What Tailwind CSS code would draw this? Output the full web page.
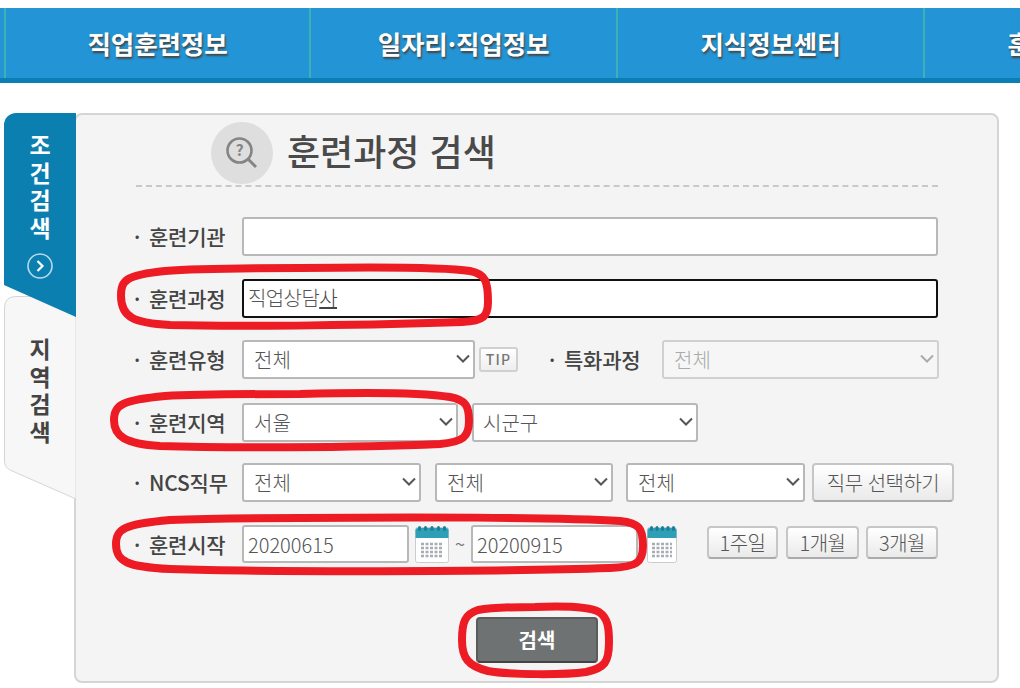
<!DOCTYPE html>
<html lang="ko">
<head>
<meta charset="utf-8">
<script src="https://cdn.jsdelivr.net/npm/@tailwindcss/browser@4"></script>
</head>
<body class="bg-white overflow-hidden font-['Noto_Sans_CJK_KR','Noto_Sans',sans-serif]">
<div class="relative w-[1020px] h-[688px] overflow-hidden pt-[8px]">

  <nav class="h-[75px] bg-[#2394d5] border-b-[5px] border-[#0a7fb4] pl-[4px] flex overflow-hidden">
    <a class="shrink-0 w-[305px] border-l-2 border-[#3fb1b5] flex items-center justify-center text-[25.500px] font-bold tracking-[-0.1px] text-white [text-shadow:1px_2px_2px_#444]">직업훈련정보</a>
    <a class="shrink-0 w-[307px] border-l-2 border-[#3fb1b5] flex items-center justify-center text-[25.500px] font-bold tracking-[-0.1px] text-white [text-shadow:1px_2px_2px_#444]">일자리·직업정보</a>
    <a class="shrink-0 w-[307px] border-l-2 border-[#3fb1b5] flex items-center justify-center text-[25.500px] font-bold tracking-[-0.1px] text-white [text-shadow:1px_2px_2px_#444]">지식정보센터</a>
    <a class="shrink-0 w-[307px] border-l-2 border-[#3fb1b5] flex items-center justify-center text-[25.500px] font-bold tracking-[-0.1px] text-white [text-shadow:1px_2px_2px_#444]">훈련기관정보</a>
  </nav>

  <div class="flex mt-[30px] ml-[4px]">
    <!-- tabs -->
    <div class="w-[72px] shrink-0 relative z-10">
      <div class="relative z-10 h-[204px] bg-[#0a7fb0] rounded-tl-[12px] [clip-path:polygon(0_0,100%_0,100%_100%,0_172px)] flex flex-col items-center pt-[18px] text-white text-[23px] font-bold leading-[27.5px]">
        <span>조</span><span>건</span><span>검</span><span>색</span>
        <svg class="mt-[12px]" width="26" height="26" viewBox="0 0 26 26" fill="none"><circle cx="13" cy="13" r="12" stroke="#b9dcea" stroke-width="1.6"/><path d="M10.5 8l5 5-5 5" stroke="#fff" stroke-width="2.2"/></svg>
      </div>
      <div class="relative -mt-[21px] h-[204px]">
        <svg class="absolute inset-0" width="72" height="204" viewBox="0 0 72 204" fill="none"><path d="M0.5 12Q0.5 0.5 12 0.5H72V203L6 174Q0.5 171 0.5 165Z" fill="#f7f7f7" stroke="#d5d5d1"/></svg>
        <div class="relative flex flex-col items-center pt-[39px] text-[#444] text-[23px] font-semibold leading-[27.5px]">
          <span>지</span><span>역</span><span>검</span><span>색</span>
        </div>
      </div>
    </div>

    <!-- panel -->
    <main class="w-[925px] h-[570px] shrink-0 -ml-[2px] bg-[#f4f4f4] border-2 border-[#d5d5d5] rounded-[8px] pl-[60px]">
      <div class="w-[802px] h-[72px] border-b-2 border-dashed border-[#c8c8c8] flex items-start relative">
        <span class="absolute left-[75px] top-[7px] w-[62px] h-[62px] rounded-full bg-[#dedede] flex items-center justify-center">
          <svg width="38" height="38" viewBox="0 0 38 38" fill="none"><circle cx="16.5" cy="16.5" r="12" stroke="#848484" stroke-width="2.6"/><path d="M25.5 25.5L33 33" stroke="#848484" stroke-width="3"/><text x="16.5" y="22" text-anchor="middle" font-size="16" font-weight="700" fill="#848484">?</text></svg>
        </span>
        <h1 class="ml-[151px] mt-[11px] text-[36px] leading-[48px] font-medium text-[#4a4a4a] whitespace-nowrap">훈련과정 검색</h1>
      </div>

      <div class="flex flex-col">
        <div class="mt-[30px] flex items-center h-[39px]">
          <label class="-ml-[2px] w-[108px] shrink-0 flex text-[21px] font-medium text-[#444] tracking-[-0.2px]"><span class="w-[15px]">·</span>훈련기관</label>
          <input class="w-[696px] h-[39px] bg-white border-2 border-[#b8b8b8] rounded-[3px]">
        </div>
        <div class="mt-[23px] flex items-center h-[39px]">
          <label class="-ml-[2px] w-[108px] shrink-0 flex text-[21px] font-medium text-[#444] tracking-[-0.2px]"><span class="w-[15px]">·</span>훈련과정</label>
          <div class="w-[696px] h-[39px] bg-white border-2 border-[#111] rounded-[3px] pl-[4px] text-[20px] font-light leading-[33px] text-[#555] tracking-[-0.6px]">직업상담<span class="underline text-[#444]">사</span></div>
        </div>
        <div class="mt-[22px] flex items-center h-[39px]">
          <label class="-ml-[2px] w-[108px] shrink-0 flex text-[21px] font-medium text-[#444] tracking-[-0.2px]"><span class="w-[15px]">·</span>훈련유형</label>
          <div class="relative w-[233px] h-[39px]"><select class="w-full h-full appearance-none bg-white border-2 border-[#b8b8b8] rounded-[3px] pl-[10px] text-[20px] font-light text-[#555]"><option>전체</option></select><svg class="absolute right-[5px] top-[14px]" width="14" height="10" viewBox="0 0 14 10" fill="none"><path d="M1 1.5l6 6 6-6" stroke="#555" stroke-width="2"/></svg></div>
          <span class="ml-[4px] w-[39px] h-[25px] rounded-[3px] border-2 border-[#d0d0d0] bg-gradient-to-b from-white to-[#eee] flex items-center justify-center text-[14px] font-medium tracking-[1.2px] text-[#777]">TIP</span>
          <label class="ml-[31px] w-[113px] shrink-0 flex text-[21px] font-medium text-[#444] tracking-[-0.2px]"><span class="w-[15px]">·</span>특화과정</label>
          <div class="relative w-[277px] h-[39px]"><select disabled class="w-full h-full appearance-none bg-[#f6f6f6] border-2 border-[#d0d0d0] rounded-[3px] pl-[10px] text-[20px] font-light text-[#aaa]"><option>전체</option></select><svg class="absolute right-[5px] top-[14px]" width="14" height="10" viewBox="0 0 14 10" fill="none"><path d="M1 1.5l6 6 6-6" stroke="#aaa" stroke-width="2"/></svg></div>
        </div>
        <div class="mt-[24px] flex items-center h-[39px]">
          <label class="-ml-[2px] w-[108px] shrink-0 flex text-[21px] font-medium text-[#444] tracking-[-0.2px]"><span class="w-[15px]">·</span>훈련지역</label>
          <div class="relative w-[216px] h-[39px]"><select class="w-full h-full appearance-none bg-white border-2 border-[#b8b8b8] rounded-[3px] pl-[10px] text-[20px] font-light text-[#555]"><option>서울</option></select><svg class="absolute right-[5px] top-[14px]" width="14" height="10" viewBox="0 0 14 10" fill="none"><path d="M1 1.5l6 6 6-6" stroke="#555" stroke-width="2"/></svg></div>
          <div class="relative ml-[14px] w-[226px] h-[39px]"><select class="w-full h-full appearance-none bg-white border-2 border-[#b8b8b8] rounded-[3px] pl-[9px] text-[20px] font-light text-[#555]"><option>시군구</option></select><svg class="absolute right-[5px] top-[14px]" width="14" height="10" viewBox="0 0 14 10" fill="none"><path d="M1 1.5l6 6 6-6" stroke="#555" stroke-width="2"/></svg></div>
        </div>
        <div class="mt-[21px] flex items-center h-[39px]">
          <label class="-ml-[2px] w-[108px] shrink-0 flex text-[21px] font-medium text-[#444] tracking-[-0.2px]"><span class="w-[15px]">·</span>NCS직무</label>
          <div class="relative w-[179px] h-[39px]"><select class="w-full h-full appearance-none bg-white border-2 border-[#b8b8b8] rounded-[3px] pl-[10px] text-[20px] font-light text-[#555]"><option>전체</option></select><svg class="absolute right-[5px] top-[14px]" width="14" height="10" viewBox="0 0 14 10" fill="none"><path d="M1 1.5l6 6 6-6" stroke="#555" stroke-width="2"/></svg></div>
          <div class="relative ml-[14px] w-[178px] h-[39px]"><select class="w-full h-full appearance-none bg-white border-2 border-[#b8b8b8] rounded-[3px] pl-[10px] text-[20px] font-light text-[#555]"><option>전체</option></select><svg class="absolute right-[5px] top-[14px]" width="14" height="10" viewBox="0 0 14 10" fill="none"><path d="M1 1.5l6 6 6-6" stroke="#555" stroke-width="2"/></svg></div>
          <div class="relative ml-[13px] w-[179px] h-[39px]"><select class="w-full h-full appearance-none bg-white border-2 border-[#b8b8b8] rounded-[3px] pl-[10px] text-[20px] font-light text-[#555]"><option>전체</option></select><svg class="absolute right-[5px] top-[14px]" width="14" height="10" viewBox="0 0 14 10" fill="none"><path d="M1 1.5l6 6 6-6" stroke="#555" stroke-width="2"/></svg></div>
          <button class="ml-[7px] w-[142px] h-[39px] rounded-[4px] border-2 border-[#c6c6c6] border-b-[#aaa] bg-gradient-to-b from-white to-[#eaeaea] text-[20px] font-light text-[#555] tracking-[-0.5px] whitespace-nowrap">직무 선택하기</button>
        </div>
        <div class="mt-[23px] flex items-start h-[39px]">
          <label class="-ml-[2px] w-[108px] shrink-0 flex leading-[39px] text-[21px] font-medium text-[#444] tracking-[-0.2px]"><span class="w-[15px]">·</span>훈련시작</label>
          <input class="w-[167px] h-[38px] bg-white border-2 border-[#b8b8b8] rounded-[3px] pl-[4px] text-[20px] font-light text-[#555]" value="20200615">
          <svg class="ml-[6px] mt-[1px] shrink-0" width="34" height="37" viewBox="0 0 34 37"><rect x="0.5" y="1.5" width="33" height="35" rx="2" fill="#fff" stroke="#ccc"/><path d="M0.5 12V4Q0.5 2 3 2H31Q33.5 2 33.5 4V12Z" fill="#2f9fb8"/><g fill="#1d7f96"><rect x="3" y="0" width="3" height="5" rx="1.5"/><rect x="9" y="0" width="3" height="5" rx="1.5"/><rect x="15.500" y="0" width="3" height="5" rx="1.5"/><rect x="22" y="0" width="3" height="5" rx="1.500"/><rect x="28" y="0" width="3" height="5" rx="1.5"/></g><path d="M6 18H28M6 22H28M6 26H28M6 30H28" stroke="#a9adb3" stroke-width="2.500" stroke-dasharray="3 1.500"/></svg>
          <span class="w-[22px] shrink-0 text-center text-[18px] leading-[36px] text-[#777]">~</span>
          <input class="w-[167px] h-[38px] bg-white border-2 border-[#b8b8b8] rounded-[3px] pl-[4px] text-[20px] font-light text-[#555]" value="20200915">
          <svg class="ml-[9px] mt-[1px] shrink-0" width="30" height="37" viewBox="0 0 30 37"><rect x="0.5" y="1.5" width="29" height="35" rx="2" fill="#fff" stroke="#ccc"/><path d="M0.5 12V4Q0.5 2 3 2H27Q29.5 2 29.500 4V12Z" fill="#2f9fb8"/><g fill="#1d7f96"><rect x="3" y="0" width="3" height="5" rx="1.500"/><rect x="8.500" y="0" width="3" height="5" rx="1.500"/><rect x="14" y="0" width="3" height="5" rx="1.500"/><rect x="19.500" y="0" width="3" height="5" rx="1.500"/><rect x="25" y="0" width="3" height="5" rx="1.500"/></g><path d="M5 18H25M5 22H25M5 26H25M5 30H25" stroke="#a9adb3" stroke-width="2.500" stroke-dasharray="3 1.500"/></svg>
          <button class="ml-[30px] mt-[1px] w-[71px] h-[33px] rounded-[4px] border-2 border-[#c6c6c6] border-b-[#aaa] bg-gradient-to-b from-white to-[#eaeaea] text-[20px] font-light text-[#555] tracking-[-0.5px] leading-none">1주일</button>
          <button class="ml-[8px] mt-[1px] w-[73px] h-[33px] rounded-[4px] border-2 border-[#c6c6c6] border-b-[#aaa] bg-gradient-to-b from-white to-[#eaeaea] text-[20px] font-light text-[#555] tracking-[-0.5px] leading-none">1개월</button>
          <button class="ml-[7px] mt-[1px] w-[72px] h-[33px] rounded-[4px] border-2 border-[#c6c6c6] border-b-[#aaa] bg-gradient-to-b from-white to-[#eaeaea] text-[20px] font-light text-[#555] tracking-[-0.5px] leading-none">3개월</button>
        </div>
      </div>

      <div class="w-[802px] flex justify-center mt-[53px]">
        <button class="w-[122px] h-[46px] rounded-[4px] bg-[#6f7272] border-2 border-[#5a5c5c] border-b-[#444] text-white text-[20px] font-bold">검색</button>
      </div>
    </main>
  </div>

  <!-- red hand-drawn annotations -->
  <svg class="absolute inset-0 pointer-events-none" width="1020" height="688" viewBox="0 0 1020 688" fill="none" stroke="#ed1c24" stroke-width="8">
    <path d="M300 268C370 267 445 267 470 271C486 274 488 282 488 302C488 316 484 321 462 322C380 325 240 327 170 325C135 323 121 318 121 296C121 280 126 275 165 271C200 268 260 268 300 268Z"/>
    <path d="M300 394C370 392 425 393 450 397C466 400 469 406 469 421C469 437 463 442 440 444C350 448 220 448 160 446C125 444 114 436 114 420C114 405 122 400 165 396C200 394 260 394 300 394Z"/>
    <path d="M300 518C400 517 560 517 620 521C639 523 643 528 643 546C643 563 636 567 610 568C500 572 260 572 170 569C128 567 116 562 116 544C116 529 124 524 170 520C210 518 260 518 300 518Z"/>
    <path d="M535 607C560 606 588 606 599 612C608 618 609 628 609 642C609 662 605 668 586 672C565 675 510 675 488 671C468 666 462 658 462 640C462 622 465 614 478 610C495 607 515 607 535 607Z"/>
  </svg>
</div>
</body>
</html>
